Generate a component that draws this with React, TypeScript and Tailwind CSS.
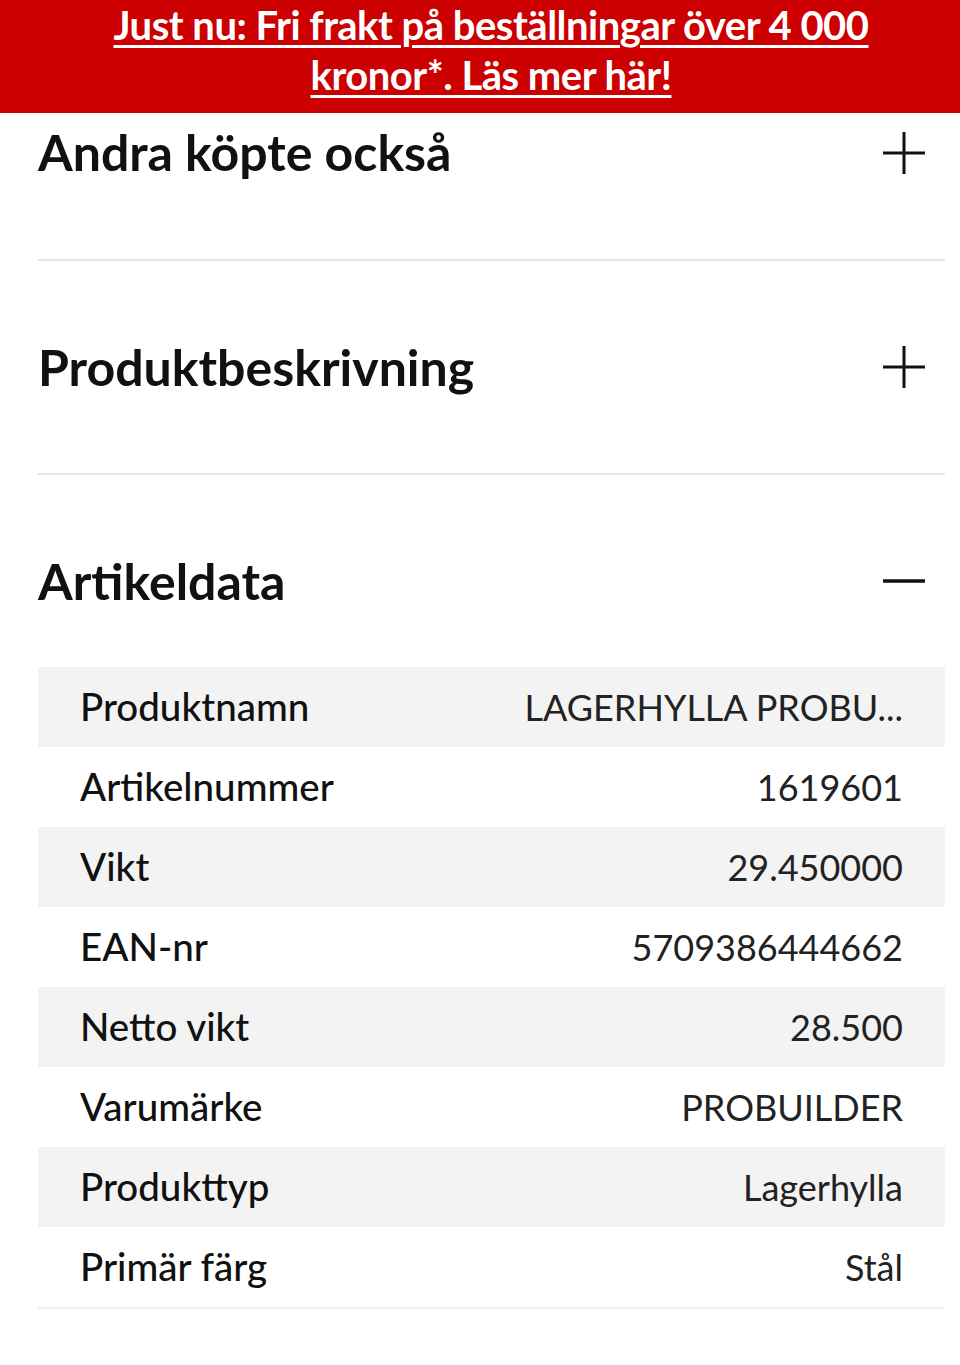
import React from "react";

const rows: [string, string][] = [
  ["Produktnamn", "LAGERHYLLA PROBU..."],
  ["Artikelnummer", "1619601"],
  ["Vikt", "29.450000"],
  ["EAN-nr", "5709386444662"],
  ["Netto vikt", "28.500"],
  ["Varumärke", "PROBUILDER"],
  ["Produkttyp", "Lagerhylla"],
  ["Primär färg", "Stål"],
];

function Plus() {
  return (
    <svg width="46" height="46" viewBox="0 0 46 46" className="shrink-0">
      <path d="M23 2v42M2 23h42" stroke="#111" strokeWidth="3" fill="none" />
    </svg>
  );
}

function Minus() {
  return (
    <svg width="46" height="46" viewBox="0 0 46 46" className="shrink-0">
      <path d="M2 23h42" stroke="#111" strokeWidth="3.5" fill="none" />
    </svg>
  );
}

export default function App() {
  return (
    <div className="w-[960px] min-h-[1365px] bg-white text-[#111]" style={{ fontFamily: "Lato, 'Noto Sans', sans-serif" }}>
      <div className="h-[113px] bg-[#cc0000] pl-[100px] pr-[78px] text-center">
        <a className="block text-white font-bold text-[40px] leading-[50px] underline decoration-[3px] underline-offset-[5px] tracking-[-0.5px]">
          Just nu: Fri frakt på beställningar över 4 000 kronor*. Läs mer här!
        </a>
      </div>
      <div className="pl-[38px] pr-[15px]">
        <div className="h-[146px] flex items-start justify-between pt-[9px]">
          <h2 className="text-[50px] font-bold leading-[60px]">Andra köpte också</h2>
          <div className="mr-[18px] mt-[8px]"><Plus /></div>
        </div>
        <div className="h-[2px] bg-[#e6e6e6]" />
        <div className="h-[212px] flex items-center justify-between">
          <h2 className="text-[50px] font-bold leading-[60px]">Produktbeskrivning</h2>
          <div className="mr-[18px]"><Plus /></div>
        </div>
        <div className="h-[2px] bg-[#e6e6e6]" />
        <div className="h-[192px] flex items-start justify-between pt-[76px]">
          <h2 className="text-[50px] font-bold leading-[60px]">Artikeldata</h2>
          <div className="mr-[18px] mt-[7px]"><Minus /></div>
        </div>
        <div className="border-b-2 border-[#efefef]">
          {rows.map(([k, v], i) => (
            <div
              key={k}
              className={`h-[80px] flex items-center justify-between pl-[42px] pr-[42px] ${i % 2 === 0 ? "bg-[#f3f3f3]" : "bg-white"}`}
            >
              <span className="font-medium text-[38.5px]">{k}</span>
              <span className="font-normal text-[36px] text-[#222]">{v}</span>
            </div>
          ))}
        </div>
      </div>
    </div>
  );
}
